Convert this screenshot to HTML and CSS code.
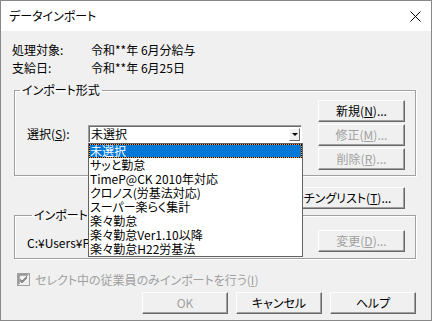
FILE: index.html
```html
<!DOCTYPE html>
<html lang="ja">
<head>
  <meta charset="UTF-8">
  <title>データインポート</title>
  <link rel="stylesheet" href="styles.css">
</head>
<body>
  <div class="window">
    <div class="titlebar">
      <div class="title">データインポート</div>
      <svg class="close" width="11" height="11" viewBox="0 0 11 11"><path d="M0.5 0.5 L10.5 10.5 M10.5 0.5 L0.5 10.5" stroke="#000" stroke-width="1" fill="none"/></svg>
    </div>

    <div class="client">
      <div class="info">
        <div class="info-row"><span class="info-label">処理対象:</span><span>令和**年 6月分給与</span></div>
        <div class="info-row"><span class="info-label">支給日:</span><span>令和**年 6月25日</span></div>
      </div>

      <fieldset class="group group-format">
        <legend>インポート形式</legend>
        <div class="select-area">
          <span class="select-label">選択(<u>S</u>):</span>
          <div class="combo">
            <span class="combo-text">未選択</span>
            <span class="combo-arrow"></span>
          </div>
        </div>
        <div class="btn-col">
          <button class="btn">新規(<u>N</u>)...</button>
          <button class="btn" disabled>修正(<u>M</u>)...</button>
          <button class="btn" disabled>削除(<u>R</u>)...</button>
        </div>
      </fieldset>

      <div class="match-row">
        <button class="btn btn-match">マッチングリスト(<u>T</u>)...</button>
      </div>

      <fieldset class="group group-file">
        <legend>インポートファイル</legend>
        <div class="file-path">C:¥Users¥Personal¥import.csv</div>
        <button class="btn" disabled>変更(<u>D</u>)...</button>
      </fieldset>

      <div class="check-row">
        <svg class="checkbox" width="13" height="13" viewBox="0 0 13 13">
          <rect x="0.5" y="0.5" width="12" height="12" fill="#f0f0f0" stroke="#a0a0a0"/>
          <path d="M1 12 V1 H12" stroke="#a0a0a0" fill="none"/>
          <path d="M2 11 V2 H11" stroke="#696969" fill="none"/>
          <path d="M3 6 L5 8 L10 3 M3 7 L5 9 L10 4 M3 8 L5 10 L10 5" stroke="#8d8d8d" fill="none"/>
        </svg>
        <span class="check-label">セレクト中の従業員のみインポートを行う(<u>I</u>)</span>
      </div>

      <div class="footer">
        <button class="btn" disabled>OK</button>
        <button class="btn">キャンセル</button>
        <button class="btn">ヘルプ</button>
      </div>
    </div>

    <!-- open drop-down of the combo, lies over the dialog -->
    <ul class="dropdown">
      <li class="selected">未選択</li>
      <li>サッと勤怠</li>
      <li>TimeP@CK 2010年対応</li>
      <li>クロノス(労基法対応)</li>
      <li>スーパー楽らく集計</li>
      <li>楽々勤怠</li>
      <li>楽々勤怠Ver1.10以降</li>
      <li>楽々勤怠H22労基法</li>
    </ul>
  </div>
</body>
</html>
```

FILE: styles.css
```css
*, *::before, *::after {
  box-sizing: border-box;
}

body {
  margin: 0;
  font-family: "Noto Sans CJK JP", "Noto Sans", sans-serif;
  font-size: 12px;
  font-feature-settings: "palt";
  color: #000;
  background: #f0f0f0;
}

.window {
  position: relative;
  width: 432px;
  height: 321px;
  border: 1px solid #888;
  background: #f0f0f0;
  overflow: hidden;
}

.titlebar {
  height: 30px;
  background: #fff;
  display: flex;
  align-items: center;
  justify-content: space-between;
  padding: 0 10px 0 8px;
}

.title {
  font-size: 12px;
  line-height: 14px;
  margin-top: -1px;
}

.close {
  display: block;
}

.client {
  display: flex;
  flex-direction: column;
}

.info {
  padding: 10px 0 0 11px;
}

.info-row {
  display: flex;
  line-height: 18px;
}

.info-label {
  width: 79px;
}

/* group boxes */
.group {
  margin: 0 15px 0 13px;
  padding: 0;
  border: 1px solid #a0a0a0;
  box-shadow: 1px 1px 0 #fff, inset 1px 1px 0 #fff;
  min-width: 0;
  display: flex;
}

.group legend {
  margin-left: 5px;
  padding: 0 2px;
  line-height: 12px;
  height: 12px;
}

.group-format {
  margin-top: 7px;
  align-items: flex-start;
  padding-bottom: 5px;
}

.select-area {
  flex: 1;
  display: flex;
  align-items: center;
  padding-left: 12px;
  margin-top: 29px;
}

.select-label {
  width: 61px;
  line-height: 18px;
}

.combo {
  width: 214px;
  height: 18px;
  background: #fff;
  border: 1px solid;
  border-color: #a0a0a0 #fff #fff #a0a0a0;
  box-shadow: inset 1px 1px 0 #696969;
  display: flex;
  align-items: center;
  justify-content: space-between;
  padding: 0 1px 0 2px;
}

.combo-text {
  line-height: 14px;
}

.combo-arrow {
  position: relative;
  width: 11px;
  height: 13px;
  margin-top: 1px;
  background: #f0f0f0;
  border: 1px solid;
  border-color: #fff #696969 #696969 #fff;
}

.combo-arrow::after {
  content: "";
  position: absolute;
  left: 2px;
  top: 4px;
  border-left: 3px solid transparent;
  border-right: 3px solid transparent;
  border-top: 3px solid #000;
}

.btn-col {
  display: flex;
  flex-direction: column;
  gap: 2px;
  margin: 4px 10px 0 0;
}

/* classic push buttons */
.btn {
  width: 87px;
  height: 22px;
  padding: 0;
  font: inherit;
  font-feature-settings: "palt";
  color: #000;
  background: #f0f0f0;
  border: 1px solid;
  border-color: #fff #696969 #696969 #fff;
  box-shadow: inset -1px -1px 0 #a0a0a0;
  line-height: 18px;
}

.btn:disabled {
  color: #a0a0a0;
}

.match-row {
  display: flex;
  justify-content: flex-end;
  padding-right: 26px;
  margin-top: 11px;
}

.btn-match {
  width: 135px;
}

.group-file {
  margin-top: 0;
  padding: 0 10px 6px 12px;
  align-items: flex-start;
}

.file-path {
  flex: 1;
  line-height: 14px;
  margin-top: 15px;
  white-space: nowrap;
}

.group-file .btn {
  margin-top: 9px;
  margin-left: 8px;
}

.check-row {
  display: flex;
  align-items: center;
  margin-top: 14px;
  padding-left: 16px;
  height: 13px;
  gap: 5px;
}

.checkbox {
  display: block;
}

.check-label {
  color: #a0a0a0;
  line-height: 13px;
}

.footer {
  display: flex;
  justify-content: flex-end;
  gap: 8px;
  padding-right: 15px;
  margin-top: 6px;
}

.footer .btn {
  width: 86px;
}

/* drop-down list */
.dropdown {
  position: absolute;
  left: 87px;
  top: 142px;
  width: 215px;
  margin: 0;
  padding: 0;
  list-style: none;
  background: #fff;
  border: 1px solid #646464;
}

.dropdown li {
  height: 14px;
  line-height: 14px;
  padding-left: 1px;
  white-space: nowrap;
}

.dropdown li.selected {
  color: #fff;
  border: 1px dotted #000;
  padding-left: 0;
  line-height: 12px;
  background: linear-gradient(#0078d7, #0078d7) padding-box, linear-gradient(#f5a23a, #f5a23a) border-box;
}
```
